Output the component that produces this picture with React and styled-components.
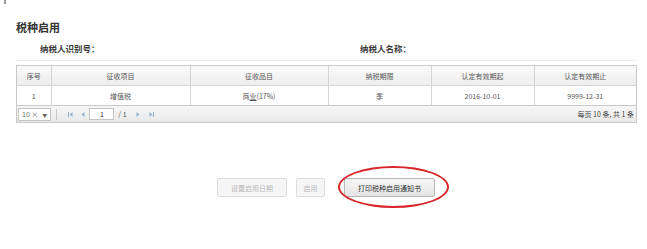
import styled, { createGlobalStyle } from 'styled-components';

const GlobalStyle = createGlobalStyle`
  html, body {
    margin: 0;
    padding: 0;
    background: #ffffff;
    font-family: "Noto Sans CJK SC", "Noto Sans", "Liberation Sans", sans-serif;
    color: #333;
  }
`;

const Page = styled.div`
  position: relative;
  width: 647px;
  height: 249px;
  overflow: hidden;
`;

const TopMark = styled.div`
  position: absolute;
  left: 4px;
  top: 0;
  width: 2px;
  height: 4px;
  background: #9a9a9a;
`;

const Title = styled.h2`
  margin: 0;
  padding: 19px 0 0 16px;
  height: 16px;
  font-size: 11px;
  line-height: 16px;
  font-weight: bold;
  color: #333;
`;

const InfoRow = styled.div`
  display: grid;
  grid-template-columns: 320px 1fr;
  padding: 6px 0 0 16px;
  height: 14px;
`;

const InfoLabel = styled.span`
  padding-left: 24px;
  font-size: 8.5px;
  line-height: 14px;
  font-weight: bold;
  color: #3a3a3a;
`;

const Divider = styled.div`
  margin: 5px 10px 0 16px;
  height: 1px;
  background: #ececec;
`;

const Grid = styled.div`
  margin: 4px 0 0 16px;
  width: 619px;
  border: 1px solid #c9c9c9;
`;

const Table = styled.table`
  width: 100%;
  border-collapse: collapse;
  table-layout: fixed;
`;

const Th = styled.th`
  height: 19px;
  padding: 0;
  font-size: 7px;
  font-weight: normal;
  color: #555;
  background: linear-gradient(#f9f9f9, #eeeeee);
  border-left: 1px solid #d4d4d4;
  border-bottom: 1px solid #d4d4d4;
  &:first-child { border-left: none; }
`;

const Td = styled.td`
  height: 19px;
  padding: 0;
  font-size: 7px;
  color: #555;
  text-align: center;
  border-left: 1px solid #d4d4d4;
  &:first-child { border-left: none; }
`;

const Link = styled.span`
  text-decoration: underline;
`;

const Pager = styled.div`
  display: flex;
  align-items: center;
  height: 16px;
  padding: 0 2px 0 1px;
  border-top: 1px solid #c9c9c9;
  background: linear-gradient(#f7f7f7, #e9e9e9);
  font-size: 7px;
  color: #555;
`;

const PageSize = styled.div`
  display: flex;
  align-items: center;
  gap: 4px;
  height: 11px;
  padding: 0 3px;
  border: 1px solid #c4c4c4;
  background: #fff;
  color: #666;
  font-size: 7px;
`;

const Caret = styled.span`
  font-size: 5px;
`;

const Sep = styled.span`
  width: 1px;
  height: 11px;
  margin: 0 10px 0 5px;
  background: #c9c9c9;
`;

const NavIcon = styled.span`
  display: flex;
  align-items: center;
  margin-right: ${p => p.$gap}px;
  color: #8fb1d4;
`;

const PageInput = styled.div`
  width: 23px;
  height: 10px;
  margin-right: 4px;
  border: 1px solid #c4c4c4;
  background: #fff;
  font-size: 7px;
  line-height: 10px;
  text-align: center;
  color: #333;
`;

const PageTotal = styled.span`
  margin-right: 8px;
  font-size: 7px;
`;

const Summary = styled.span`
  margin-left: auto;
  font-size: 7px;
  color: #444;
`;

const Actions = styled.div`
  position: relative;
  display: flex;
  align-items: center;
  margin-top: 55px;
  padding-left: 217px;
`;

const Button = styled.button`
  height: 19px;
  width: ${p => p.$w}px;
  margin-right: ${p => p.$mr || 0}px;
  padding: 0;
  font-family: inherit;
  font-size: 7px;
  border-radius: 2px;
  border: 1px solid ${p => (p.disabled ? '#dedede' : '#b9b9b9')};
  color: ${p => (p.disabled ? '#b9b9b9' : '#333')};
  background: ${p => (p.disabled ? '#f6f6f6' : 'linear-gradient(#f7f7f7, #e4e4e4)')};
`;

const Circle = styled.div`
  position: absolute;
  left: 338px;
  top: -12px;
  width: 107px;
  height: 38px;
  border: 2px solid #d8262a;
  border-radius: 50%;
  pointer-events: none;
`;

const Arrow = ({ dir, bar }) => (
  <svg width="7" height="7" viewBox="0 0 7 7">
    {dir === 'left' ? (
      <>
        {bar && <rect x="1" y="1" width="1" height="5" fill="currentColor" />}
        <path d="M5.5 1 L2.5 3.5 L5.5 6 Z" fill="currentColor" />
      </>
    ) : (
      <>
        <path d="M1.5 1 L4.5 3.5 L1.5 6 Z" fill="currentColor" />
        {bar && <rect x="5" y="1" width="1" height="5" fill="currentColor" />}
      </>
    )}
  </svg>
);

const columns = ['序号', '征收项目', '征收品目', '纳税期限', '认定有效期起', '认定有效期止'];
const widths = [34, 139, 138, 103, 103, 102];

export default function App() {
  return (
    <Page>
      <GlobalStyle />
      <TopMark />
      <Title>税种启用</Title>
      <InfoRow>
        <InfoLabel>纳税人识别号：</InfoLabel>
        <InfoLabel>纳税人名称：</InfoLabel>
      </InfoRow>
      <Divider />
      <Grid>
        <Table>
          <colgroup>
            {widths.map((w, i) => (
              <col key={i} style={{ width: w }} />
            ))}
          </colgroup>
          <thead>
            <tr>
              {columns.map(c => (
                <Th key={c}>{c}</Th>
              ))}
            </tr>
          </thead>
          <tbody>
            <tr>
              <Td>1</Td>
              <Td>增值税</Td>
              <Td>
                商<Link>业</Link>(17%)
              </Td>
              <Td>季</Td>
              <Td>2016-10-01</Td>
              <Td>9999-12-31</Td>
            </tr>
          </tbody>
        </Table>
        <Pager>
          <PageSize>
            10 × <Caret>▼</Caret>
          </PageSize>
          <Sep />
          <NavIcon $gap={5}><Arrow dir="left" bar /></NavIcon>
          <NavIcon $gap={3}><Arrow dir="left" /></NavIcon>
          <PageInput>1</PageInput>
          <PageTotal>/ 1</PageTotal>
          <NavIcon $gap={6}><Arrow dir="right" /></NavIcon>
          <NavIcon $gap={0}><Arrow dir="right" bar /></NavIcon>
          <Summary>每页 10 条, 共 1 条</Summary>
        </Pager>
      </Grid>
      <Actions>
        <Button disabled $w={70} $mr={9}>设置启用日期</Button>
        <Button disabled $w={29} $mr={19}>启用</Button>
        <Button $w={91}>打印税种启用通知书</Button>
        <Circle />
      </Actions>
    </Page>
  );
}
